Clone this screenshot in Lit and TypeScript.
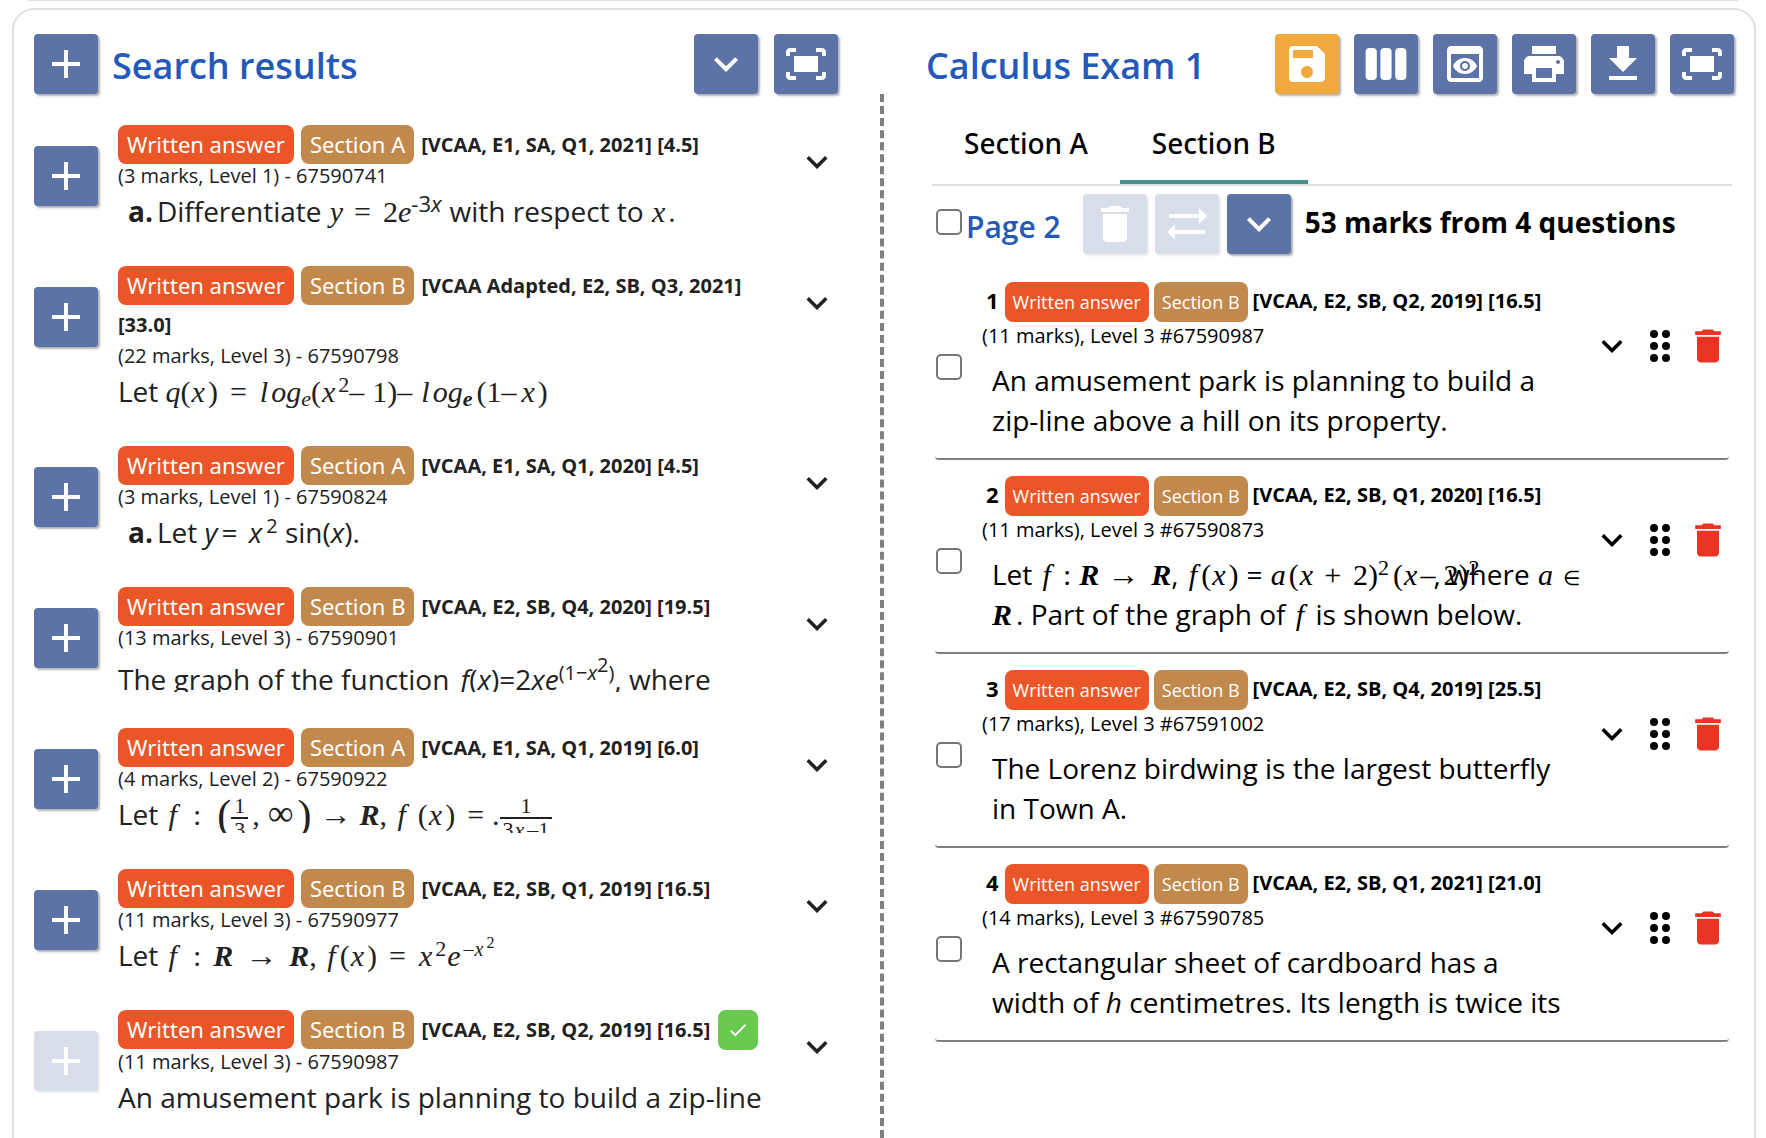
import { LitElement, html, css, svg, type TemplateResult } from "lit";
import { customElement, property, state } from "lit/decorators.js";
import { classMap } from "lit/directives/class-map.js";

const ICONS: Record<string, string> = {
  add: "M19 13h-6v6h-2v-6H5v-2h6V5h2v6h6v2z",
  expand: "M16.59 8.59 12 13.17 7.41 8.59 6 10l6 6 6-6z",
  fit: "M17 4h3c1.1 0 2 .9 2 2v2h-2V6h-3V4zM4 8V6h3V4H4c-1.1 0-2 .9-2 2v2h2zm16 8v2h-3v2h3c1.1 0 2-.9 2-2v-2h-2zM7 18H4v-2H2v2c0 1.1.9 2 2 2h3v-2zM18 8H6v8h12V8z",
  save: "M17 3H5c-1.11 0-2 .9-2 2v14c0 1.1.89 2 2 2h14c1.1 0 2-.9 2-2V7l-4-4zm-5 16c-1.66 0-3-1.34-3-3s1.34-3 3-3 3 1.34 3 3-1.34 3-3 3zm3-10H5V5h10v4z",
  columns:
    "M3.8 4h1.6q2 0 2 2v12q0 2-2 2H3.8q-2 0-2-2V6q0-2 2-2zM11.2 4h1.6q2 0 2 2v12q0 2-2 2h-1.6q-2 0-2-2V6q0-2 2-2zM18.6 4h1.6q2 0 2 2v12q0 2-2 2h-1.6q-2 0-2-2V6q0-2 2-2z",
  preview:
    "M19 3H5c-1.11 0-2 .9-2 2v14c0 1.1.89 2 2 2h14c1.1 0 2-.9 2-2V5c0-1.1-.89-2-2-2zm0 16H5V7h14v12zm-5.5-6c0 .83-.67 1.5-1.5 1.5s-1.5-.67-1.5-1.5.67-1.5 1.5-1.5 1.5.67 1.5 1.5zM12 9c-2.73 0-5.06 1.66-6 4 .94 2.34 3.27 4 6 4s5.06-1.66 6-4c-.94-2.34-3.27-4-6-4zm0 6.5c-1.38 0-2.5-1.12-2.5-2.5s1.12-2.5 2.5-2.5 2.5 1.12 2.5 2.5-1.12 2.5-2.5 2.5z",
  print:
    "M19 8H5c-1.66 0-3 1.34-3 3v6h4v4h12v-4h4v-6c0-1.66-1.34-3-3-3zm-3 11H8v-5h8v5zm3-7c-.55 0-1-.45-1-1s.45-1 1-1 1 .45 1 1-.45 1-1 1zm-1-9H6v4h12V3z",
  download: "M19 9h-4V3H9v6H5l7 7 7-7zM5 18v2h14v-2H5z",
  trash: "M6 19c0 1.1.9 2 2 2h8c1.1 0 2-.9 2-2V7H6v12zM19 4h-3.5l-1-1h-5l-1 1H5v2h14V4z",
  swap: "m22 8-4-4v3H3v2h15v3l4-4zM2 16l4 4v-3h15v-2H6v-3l-4 4z",
  check: "M9 16.17 4.83 12l-1.42 1.41L9 19 21 7l-1.41-1.41z",
  drag: "M7 6a2 2 0 1 0 4 0a2 2 0 1 0-4 0zM13 6a2 2 0 1 0 4 0a2 2 0 1 0-4 0zM7 12a2 2 0 1 0 4 0a2 2 0 1 0-4 0zM13 12a2 2 0 1 0 4 0a2 2 0 1 0-4 0zM7 18a2 2 0 1 0 4 0a2 2 0 1 0-4 0zM13 18a2 2 0 1 0 4 0a2 2 0 1 0-4 0z",
};

const icon = (name: string, size = 48) => html`
  <svg viewBox="0 0 24 24" width=${size} height=${size} aria-hidden="true">${svg`<path d=${ICONS[name]} />`}</svg>
`;

const base = css`
  * { box-sizing: border-box; }
  svg { display: block; fill: currentColor; flex: none; }
  button { font: inherit; color: inherit; border: 0; padding: 0; background: none; cursor: pointer; }
`;

const tagStyles = css`
  .tag {
    display: inline-block;
    border-radius: 8px;
    padding: 0 8px;
    color: #fff;
    font-weight: 400;
    white-space: nowrap;
  }
  .written { background: #eb5628; }
  .section { background: #c2894d; }
`;

const mathStyles = css`
  .m { font-family: "Liberation Serif", serif; font-size: 30px; line-height: 0; white-space: nowrap; }
  .m i { padding: 0 3px 0 1px; }
  .m i.tight { padding: 0; }
  .m i.f { padding: 0 4px 0 3px; }
  .m b { font-style: italic; }
  sup, sub { line-height: 0; font-size: 22px; }
  sup { vertical-align: 10px; }
  sub { vertical-align: -4px; }
  sup.s { font-size: 20px; }
  sup.s sup { font-size: 20px; vertical-align: 8px; }
  sup.s sup.n { font-size: 16px; }
  .g4 { margin-left: 4px; }
  .g8 { margin-left: 8px; }
  .g12 { margin-left: 12px; }
  .g16 { margin-left: 16px; }
  .arrow { font-size: 32px; }
  .inf { font-size: 36px; }
  .frac {
    display: inline-flex;
    flex-direction: column;
    align-items: center;
    vertical-align: middle;
    margin: -8px 0;
    font-size: 22px;
    line-height: 22px;
  }
  .frac > span { padding: 0 3px; }
  .frac > span:first-child { border-bottom: 2px solid currentColor; align-self: stretch; text-align: center; }
  .tall { font-size: 42px; vertical-align: -4px; }
  .over { margin-right: -46px; }
`;

@customElement("icon-button")
class IconButton extends LitElement {
  @property() icon = "add";
  @property() label = "";
  @property() tone = "blue";
  @property({ type: Boolean }) disabled = false;

  static styles = [
    base,
    css`
      :host { display: block; flex: none; }
      .btn {
        display: flex;
        align-items: center;
        justify-content: center;
        width: 64px;
        height: 60px;
        border-radius: 4px;
        background: #5c73a8;
        color: #fff;
        box-shadow: 2px 2px 2px rgba(0, 0, 0, 0.3);
      }
      .amber { background: #f0a93c; }
      .btn:disabled { opacity: 0.24; cursor: default; }
    `,
  ];

  render() {
    return html`<button
      class=${classMap({ btn: true, amber: this.tone === "amber" })}
      aria-label=${this.label}
      ?disabled=${this.disabled}
    >${icon(this.icon)}</button>`;
  }
}

interface Result {
  section: string;
  source: string;
  meta: string;
  body: TemplateResult;
  tall?: boolean;
  added?: boolean;
}

const X = html`<i>x</i>`;
const F = html`<i class="f">f</i>`;

const RESULTS: Result[] = [
  {
    section: "A",
    source: "[VCAA, E1, SA, Q1, 2021] [4.5]",
    meta: "(3 marks, Level 1) - 67590741",
    body: html`<b class="part">a.</b>Differentiate <span class="m"><i>y</i><span class="g8">=</span><span class="g12">2</span><i class="tight">e</i></span><sup>-3<i>x</i></sup><span class="g8">with respect to </span><span class="m">${X}</span>.`,
  },
  {
    section: "B",
    source: "[VCAA Adapted, E2, SB, Q3, 2021] [33.0]",
    meta: "(22 marks, Level 3) - 67590798",
    body: html`Let <span class="m"><i class="tight">q</i>(${X})<span class="g12">=</span><i class="g12">l</i><i class="tight">o</i><i class="tight">g</i><sub><i class="tight">e</i></sub>(${X}<sup>2</sup>–<span class="g8">1</span>)–<i class="g8">l</i><i class="tight">o</i><i class="tight">g</i><sub><b>e</b></sub><span class="g4">(1–</span><i class="g4">x</i>)</span>`,
  },
  {
    section: "A",
    source: "[VCAA, E1, SA, Q1, 2020] [4.5]",
    meta: "(3 marks, Level 1) - 67590824",
    body: html`<b class="part">a.</b>Let <i>y</i><span class="g4">= </span><i class="g4">x</i><sup class="s g4">2</sup> <span>sin(</span><i>x</i>).`,
  },
  {
    section: "B",
    source: "[VCAA, E2, SB, Q4, 2020] [19.5]",
    meta: "(13 marks, Level 3) - 67590901",
    tall: true,
    body: html`The graph of the function <i class="g4">f</i>(<i>x</i>)=2<i>xe</i><sup class="s">(1−<i>x</i><sup>2</sup>)</sup>, where`,
  },
  {
    section: "A",
    source: "[VCAA, E1, SA, Q1, 2019] [6.0]",
    meta: "(4 marks, Level 2) - 67590922",
    body: html`Let <span class="m">${F}<span class="g12">:</span><span class="g16 tall">(</span><span class="frac"><span>1</span><span>3</span></span><span class="g4">,</span><span class="g8 inf">∞</span><span class="g4 tall">)</span><span class="g8 arrow">→</span><b class="g8">R</b>, ${F}<span class="g8">(</span>${X})<span class="g12">=</span><span class="g8">.</span><span class="frac"><span>1</span><span>3<i>x</i>–1</span></span></span>`,
  },
  {
    section: "B",
    source: "[VCAA, E2, SB, Q1, 2019] [16.5]",
    meta: "(11 marks, Level 3) - 67590977",
    body: html`Let <span class="m">${F}<span class="g12">:</span><b class="g12">R</b><span class="g12 arrow">→</span><b class="g12">R</b>, ${F}(${X})<span class="g12">=</span><i class="g12">x</i><sup>2</sup><i>e</i><sup class="s">–<i>x</i><sup class="n">2</sup></sup></span>`,
  },
  {
    section: "B",
    source: "[VCAA, E2, SB, Q2, 2019] [16.5]",
    meta: "(11 marks, Level 3) - 67590987",
    added: true,
    body: html`An amusement park is planning to build a zip-line`,
  },
];

@customElement("result-row")
class ResultRow extends LitElement {
  @property({ attribute: false }) item!: Result;

  static styles = [
    base,
    tagStyles,
    mathStyles,
    css`
      :host { display: flex; align-items: flex-start; gap: 20px; color: #212121; }
      .add { margin-top: 21px; }
      .text { flex: 1; min-width: 0; overflow: hidden; font-size: 20px; }
      .head { font-weight: 700; line-height: 39px; }
      .tag {
        font-family: "Noto Sans", sans-serif;
        font-size: 22px;
        height: 39px;
        padding: 0 9px;
        margin-right: 7px;
        vertical-align: top;
      }
      .meta { line-height: 24px; }
      .body { margin-top: 5px; height: 37px; line-height: 37px; font-size: 28px; white-space: nowrap; }
      .body.low { padding-top: 6px; }
      .part { margin: 0 4px 0 10px; }
      .done {
        display: inline-flex;
        align-items: center;
        justify-content: center;
        width: 40px;
        height: 40px;
        border-radius: 8px;
        background: #68c94f;
        color: #fff;
        margin-left: 8px;
        vertical-align: top;
      }
      .more { width: 42px; height: 42px; margin-top: 16px; }
    `,
  ];

  render() {
    const r = this.item;
    return html`
      <icon-button class="add" label="Add question" ?disabled=${r.added}></icon-button>
      <div class="text">
        <div class="head"><span class="tag written">Written answer</span><span class="tag section">Section ${r.section}</span>${r.source}${r.added ? html`<span class="done">${icon("check", 22)}</span>` : null}</div>
        <div class="meta">${r.meta}</div>
        <div class=${classMap({ body: true, low: !!r.tall })}>${r.body}</div>
      </div>
      <button class="more" aria-label="Show question">${icon("expand", 42)}</button>
    `;
  }
}

interface Question {
  source: string;
  meta: string;
  body: TemplateResult;
}

const QUESTIONS: Question[] = [
  {
    source: "[VCAA, E2, SB, Q2, 2019] [16.5]",
    meta: "(11 marks), Level 3 #67590987",
    body: html`An amusement park is planning to build a zip-line above a hill on its property.`,
  },
  {
    source: "[VCAA, E2, SB, Q1, 2020] [16.5]",
    meta: "(11 marks), Level 3 #67590873",
    body: html`Let <span class="m">${F}<span class="g8">:</span><b class="g8">R</b><span class="g8 arrow">→</span><b class="g12">R</b></span>, <span class="m">${F}(${X})</span><span class="g8">= </span><span class="m"><i>a</i><span>(</span>${X}<span class="g8">+</span><span class="g12">2</span>)<sup>2</sup><span class="g4">(</span>${X}<span class="over">–<span class="g8">2</span>)<sup>2</sup></span></span>, where <span class="m"><i>a</i></span> <span class="m in">∈</span> <span class="m"><b>R</b></span><span class="g4">. Part of the graph of</span> <span class="m">${F}</span> is shown below.`,
  },
  {
    source: "[VCAA, E2, SB, Q4, 2019] [25.5]",
    meta: "(17 marks), Level 3 #67591002",
    body: html`The Lorenz birdwing is the largest butterfly in Town A.`,
  },
  {
    source: "[VCAA, E2, SB, Q1, 2021] [21.0]",
    meta: "(14 marks), Level 3 #67590785",
    body: html`A rectangular sheet of cardboard has a width of <i>h</i> centimetres. Its length is twice its`,
  },
];

const boxStyles = css`
  .box {
    appearance: none;
    flex: none;
    width: 26px;
    height: 26px;
    margin: 0;
    border: 2px solid #767676;
    border-radius: 5px;
    background: #fff;
  }
  .box:checked { background: #5c73a8; }
`;

@customElement("exam-question")
class ExamQuestion extends LitElement {
  @property({ attribute: false }) item!: Question;
  @property({ type: Number }) number = 1;

  static styles = [
    base,
    tagStyles,
    mathStyles,
    boxStyles,
    css`
      :host {
        display: flex;
        align-items: flex-start;
        padding: 16px 0 18px 1px;
        border-bottom: 2px solid #808080;
        border-radius: 4px;
        color: #000;
      }
      .box { margin: 72px 20px 0 0; }
      .text { flex: 1; min-width: 0; font-size: 20px; }
      .head { display: flex; align-items: center; font-weight: 700; white-space: nowrap; }
      .num { font-size: 22px; padding: 0 6px 4px 4px; }
      .tag { font-size: 18px; line-height: 40px; height: 40px; margin-right: 5px; }
      .source { padding-bottom: 4px; }
      .meta { line-height: 28px; }
      .body { margin-top: 10px; padding: 0 12px 0 10px; height: 80px; overflow: hidden; font-size: 28px; line-height: 40px; }
      .in { font-size: 20px; margin-right: -12px; }
      .actions { display: flex; margin: 40px -3px 0 0; }
      .act { display: flex; align-items: center; justify-content: center; width: 48px; height: 48px; }
      .red { color: #e93323; }
    `,
  ];

  render() {
    const q = this.item;
    return html`
      <input class="box" type="checkbox" aria-label="Select question ${this.number}" />
      <div class="text">
        <div class="head">
          <span class="num">${this.number}</span>
          <span class="tag written">Written answer</span>
          <span class="tag section">Section B</span>
          <span class="source">${q.source}</span>
        </div>
        <div class="meta">${q.meta}</div>
        <div class="body">${q.body}</div>
      </div>
      <div class="actions">
        <button class="act" aria-label="Show question">${icon("expand", 42)}</button>
        <button class="act" aria-label="Move question">${icon("drag")}</button>
        <button class="act red" aria-label="Delete question">${icon("trash", 44)}</button>
      </div>
    `;
  }
}

@customElement("app-root")
class AppRoot extends LitElement {
  @state() private tab = "B";

  static styles = [
    base,
    boxStyles,
    css`
      :host {
        display: flex;
        flex-direction: column;
        min-height: 100vh;
        background: #fff;
        font-family: "Open Sans", "Noto Sans", sans-serif;
      }
      .previous { height: 1px; margin: 0 28px; background: #e0e0e0; }
      .panel {
        flex: 1;
        display: grid;
        grid-template-columns: calc(50% - 4px) 4px minmax(0, 1fr);
        margin: 7px 10px 0 12px;
        border: 2px solid #e0e0e0;
        border-bottom: 0;
        border-radius: 22px 22px 0 0;
      }
      .left { padding: 24px 42px 0 20px; min-width: 0; }
      .right { padding: 24px 20px 0 42px; min-width: 0; }
      .divider { margin-top: 84px; border-left: 4px dashed #808080; }
      .bar { display: flex; align-items: center; height: 60px; }
      h1, h2 { margin: 0; color: #2459b9; font-weight: 600; white-space: nowrap; }
      h1 { flex: 1; font-size: 36px; line-height: 56px; padding-top: 4px; }
      .left h1 { padding-left: 14px; }
      .tools { display: flex; gap: 15px; }
      .left .tools { gap: 16px; }
      .results { display: flex; flex-direction: column; gap: 36px; margin-top: 31px; }
      .tabs { display: flex; margin: 10px 2px 0 6px; border-bottom: 2px solid #e0e0e0; }
      .tab {
        height: 80px;
        padding: 2px 32px 0;
        font: 500 28px "Noto Sans", sans-serif;
        color: #000;
        border-bottom: 4px solid transparent;
      }
      .tab.on { border-color: #449190; }
      .page { display: flex; align-items: center; margin: 8px 0 12px; padding-left: 10px; }
      .page .box { margin-bottom: 4px; }
      h2 { font-size: 30px; padding-top: 4px; margin: 0 22px 0 4px; }
      .page .tools { gap: 8px; }
      .total { margin: 0 0 4px 14px; font-size: 28px; font-weight: 700; white-space: nowrap; }
      .questions { margin: 0 5px 0 9px; }
    `,
  ];

  render() {
    return html`
      <div class="previous"></div>
      <main class="panel">
        <section class="left">
          <header class="bar">
            <icon-button label="Add all"></icon-button>
            <h1>Search results</h1>
            <div class="tools">
              <icon-button icon="expand" label="Expand all"></icon-button>
              <icon-button icon="fit" label="Full screen"></icon-button>
            </div>
          </header>
          <div class="results">${RESULTS.map((r) => html`<result-row .item=${r}></result-row>`)}</div>
        </section>
        <div class="divider"></div>
        <section class="right">
          <header class="bar">
            <h1>Calculus Exam 1</h1>
            <div class="tools">
              <icon-button icon="save" tone="amber" label="Save"></icon-button>
              <icon-button icon="columns" label="Columns"></icon-button>
              <icon-button icon="preview" label="Preview"></icon-button>
              <icon-button icon="print" label="Print"></icon-button>
              <icon-button icon="download" label="Download"></icon-button>
              <icon-button icon="fit" label="Full screen"></icon-button>
            </div>
          </header>
          <nav class="tabs" role="tablist">
            ${["A", "B"].map(
              (t) => html`<button
                class=${classMap({ tab: true, on: this.tab === t })}
                role="tab"
                aria-selected=${this.tab === t}
                @click=${() => (this.tab = t)}
              >Section ${t}</button>`
            )}
          </nav>
          <div class="page">
            <input id="page" class="box" type="checkbox" />
            <h2><label for="page">Page 2</label></h2>
            <div class="tools">
              <icon-button icon="trash" label="Delete selected" disabled></icon-button>
              <icon-button icon="swap" label="Move selected" disabled></icon-button>
              <icon-button icon="expand" label="Expand page"></icon-button>
            </div>
            <p class="total">53 marks from 4 questions</p>
          </div>
          <div class="questions">
            ${QUESTIONS.map((q, i) => html`<exam-question .item=${q} .number=${i + 1}></exam-question>`)}
          </div>
        </section>
      </main>
    `;
  }
}
